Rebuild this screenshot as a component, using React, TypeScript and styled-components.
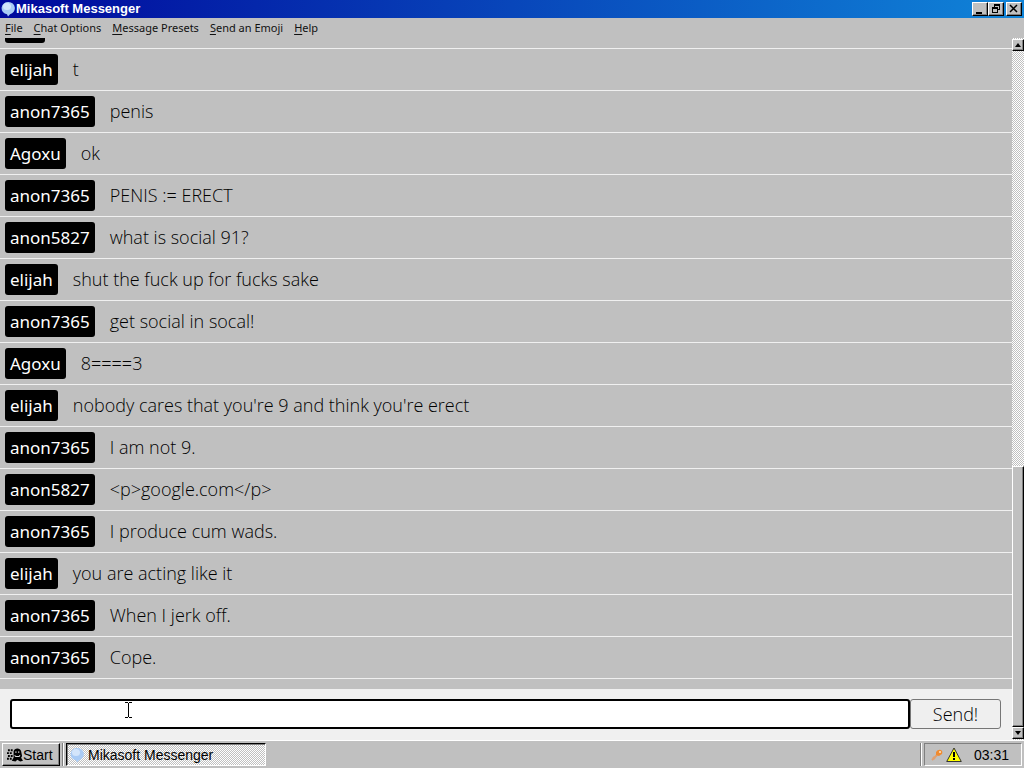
import React from "react";
import styled, { createGlobalStyle } from "styled-components";

const face = "#c0c0c0";
const uiFont = '"Liberation Sans", Arial, sans-serif';
const chatFont = '"Noto Sans", "Open Sans", sans-serif';
const lightFont = '"Open Sans", "Noto Sans", sans-serif';

const Global = createGlobalStyle`
  * { box-sizing: border-box; }
  body { margin: 0; background: ${face}; color: #000; }
`;

const Desktop = styled.div`
  display: flex;
  flex-direction: column;
  height: 100vh;
  overflow: hidden;
`;

const TitleBar = styled.header`
  display: flex;
  align-items: center;
  height: 18px;
  padding: 0 2px 0 1px;
  background: linear-gradient(90deg, #00089c, #1084d8);
  flex: none;
`;

const Title = styled.h1`
  flex: 1;
  margin: 0;
  color: #fff;
  font: bold 13px/18px ${uiFont};
`;

const WindowButtons = styled.div`
  display: flex;
`;

const CaptionButton = styled.button<{ $apart?: boolean }>`
  display: block;
  width: 16px;
  height: 14px;
  margin-left: ${(p) => (p.$apart ? 2 : 0)}px;
  padding: 0;
  background: ${face};
  border: 1px solid;
  border-color: #fff #000 #000 #fff;
  box-shadow: inset -1px -1px #808080;

  svg { display: block; }
`;

const MenuBar = styled.nav`
  display: flex;
  flex: none;
  gap: 11px;
  height: 20px;
  padding: 0 5px;
`;

const MenuButton = styled.button`
  padding: 0;
  border: 0;
  background: none;
  font: 11px/20px ${chatFont};
  color: #111;
  white-space: nowrap;
`;

const Hotkey = styled.span`
  text-decoration: underline;
  text-underline-offset: 2px;
`;

const Client = styled.main`
  display: flex;
  flex: 1;
  min-height: 0;
`;

const Chat = styled.section`
  display: flex;
  flex: 1;
  flex-direction: column;
  min-width: 0;
`;

const Messages = styled.ul`
  display: flex;
  flex: 1;
  flex-direction: column;
  justify-content: flex-end;
  min-height: 0;
  margin: 0;
  padding: 0 0 10px;
  overflow: hidden;
  list-style: none;
`;

const Message = styled.li`
  display: flex;
  flex: none;
  gap: 15px;
  height: 42px;
  padding: 5px;
  border-bottom: 1px solid #f0f0f0;
  font: 300 18px/31px ${lightFont};
`;

const Author = styled.b`
  min-width: 40px;
  height: 31px;
  padding: 0 5px;
  border-radius: 3px;
  background: #000;
  color: #fff;
  font: 17px/32px ${chatFont};
`;

const Composer = styled.form`
  display: flex;
  flex: none;
  padding: 10px 11px 11px 10px;
  background: #f0f0f0;
`;

const TextField = styled.div`
  position: relative;
  display: flex;
  flex: 1;
  min-width: 0;
`;

const TextBox = styled.input`
  flex: 1;
  min-width: 0;
  height: 30px;
  border: 2px solid #000;
  border-radius: 3px;
  background: #fff;
  outline: 0;
  font: 300 18px/24px ${lightFont};
`;

const Pointer = styled.svg`
  position: absolute;
  top: 3px;
  left: 115px;
  pointer-events: none;
`;

const SendButton = styled.button`
  width: 91px;
  height: 30px;
  padding: 0;
  border: 1px solid #767676;
  border-radius: 3px;
  background: #efefef;
  color: #000;
  font: 300 18px/28px ${lightFont};
`;

const ScrollBar = styled.div`
  display: flex;
  flex: none;
  flex-direction: column;
  width: 12px;
  padding: 1px 0;
  background: repeating-conic-gradient(#fff 0 25%, ${face} 0 50%) 0 0 / 2px 2px;
`;

const ScrollButton = styled.button`
  flex: none;
  width: 12px;
  height: 12px;
  padding: 0;
  border: 1px solid;
  border-color: #fff #000 #000 #fff;
  background: ${face};
  box-shadow: inset -1px -1px #808080;

  svg { display: block; }
`;

const ScrollTrack = styled.div`
  flex: 8;
`;

const ScrollThumb = styled.div`
  flex: 5;
  border: 1px solid;
  border-color: #fff #000 #000 #fff;
  background: ${face};
  box-shadow: inset -1px -1px #808080;
`;

const TaskBar = styled.footer`
  display: flex;
  flex: none;
  align-items: center;
  gap: 2px;
  height: 28px;
  padding: 0 2px;
  border-top: 1px solid #fff;
  background: ${face};
  font: 14px/20px ${uiFont};
`;

const StartButton = styled.button`
  display: flex;
  align-items: center;
  height: 23px;
  width: 58px;
  padding: 0 0 0 4px;
  border: 1px solid;
  border-color: #fff #000 #000 #fff;
  background: ${face};
  box-shadow: inset -1px -1px #808080;
  font: 14px/20px ${uiFont};
  color: #000;
`;

const Divider = styled.span`
  width: 2px;
  height: 23px;
  border-left: 1px solid #808080;
  border-right: 1px solid #fff;
`;

const TaskButton = styled.button`
  display: flex;
  align-items: center;
  gap: 3px;
  width: 200px;
  height: 23px;
  padding: 0 3px;
  border: 1px solid;
  border-color: #000 #fff #fff #000;
  background: repeating-conic-gradient(#fff 0 25%, ${face} 0 50%) 0 0 / 2px 2px;
  box-shadow: inset 1px 1px #808080;
  font: 14px/20px ${uiFont};
  color: #000;
`;

const Tray = styled.div`
  display: flex;
  align-items: center;
  gap: 2px;
  height: 23px;
  padding: 0 12px 0 5px;
  border: 1px solid;
  border-color: #808080 #fff #fff #808080;
`;

const Clock = styled.time`
  margin-left: 10px;
`;

const Spacer = styled.span`
  flex: 1;
`;

const Balloon = () => (
  <svg width="15" height="16" viewBox="0 0 15 16" aria-hidden="true">
    <path d="M7.500 1a6.500 6.200 0 0 1 1.500 12.200L7 15.500 6 13.300A6.500 6.200 0 0 1 7.500 1Z" fill="#a9cbf5" />
    <ellipse cx="6" cy="5.500" rx="4" ry="3.500" fill="#d3e5fb" />
  </svg>
);

const StartLogo = () => (
  <svg width="16" height="16" viewBox="0 0 17 16" aria-hidden="true">
    <path d="M7 4q1-3 4-3t4 3l1 5-1 2 2 3-3 1-3-2-2 2-4-1 2-3Z" fill="#000" />
    <path d="M1 3h5M0 6h6M1 9h5M0 12h6" stroke="#000" strokeWidth="2" strokeDasharray="2 1" />
    <path d="M9 4h1v2H9zM12 4h1v2h-1zM8 8h1v1h4V8h1v1l-1 1H9L8 9Z" fill="#ddd" />
  </svg>
);

const KeyIcon = () => (
  <svg width="14" height="14" viewBox="0 0 14 14" aria-hidden="true">
    <path d="M2 12 8 6M3 9l2 2" stroke="#e0a070" strokeWidth="2" />
    <path d="M6 4q2-3 5-2 2 1 1 4l-3 2-3-1Z" fill="#f08b30" />
    <path d="M9 3h2v2H9z" fill="#fbd0a0" />
  </svg>
);

const WarningIcon = () => (
  <svg width="16" height="16" viewBox="0 0 16 16" aria-hidden="true">
    <path d="M8 1 15.300 14.500H.7Z" fill="#ff0" stroke="#333" strokeLinejoin="round" />
    <path d="M7 5h2v5H7zM7 11h2v2H7z" fill="#000" />
  </svg>
);

const menus = ["File", "Chat Options", "Message Presets", "Send an Emoji", "Help"];

const messages = [
  ["", ""],
  ["elijah", "t"],
  ["anon7365", "penis"],
  ["Agoxu", "ok"],
  ["anon7365", "PENIS := ERECT"],
  ["anon5827", "what is social 91?"],
  ["elijah", "shut the fuck up for fucks sake"],
  ["anon7365", "get social in socal!"],
  ["Agoxu", "8====3"],
  ["elijah", "nobody cares that you're 9 and think you're erect"],
  ["anon7365", "I am not 9."],
  ["anon5827", "<p>google.com</p>"],
  ["anon7365", "I produce cum wads."],
  ["elijah", "you are acting like it"],
  ["anon7365", "When I jerk off."],
  ["anon7365", "Cope."],
];

export default function App() {
  return (
    <Desktop>
      <Global />
      <TitleBar>
        <Balloon />
        <Title>Mikasoft Messenger</Title>
        <WindowButtons>
          <CaptionButton aria-label="Minimize">
            <svg width="14" height="12"><path d="M3 9h6v2H3z" /></svg>
          </CaptionButton>
          <CaptionButton aria-label="Restore">
            <svg width="14" height="12" shapeRendering="crispEdges">
              <path d="M5 1h6v2H5zM5 3h1v2H5zM10 3h1v4h-1zM9 6h1v1H9zM3 4h6v2H3zM3 6h1v4H3zM8 6h1v4H8zM3 9h6v1H3z" />
            </svg>
          </CaptionButton>
          <CaptionButton $apart aria-label="Close">
            <svg width="14" height="12"><path d="m3 2 7 7m0-7-7 7" stroke="#000" strokeWidth="1.500" /></svg>
          </CaptionButton>
        </WindowButtons>
      </TitleBar>
      <MenuBar>
        {menus.map((m) => (
          <MenuButton key={m}><Hotkey>{m[0]}</Hotkey>{m.slice(1)}</MenuButton>
        ))}
      </MenuBar>
      <Client>
        <Chat>
          <Messages>
            {messages.map(([author, text], i) => (
              <Message key={i}><Author>{author}</Author><span>{text}</span></Message>
            ))}
          </Messages>
          <Composer onSubmit={(e) => e.preventDefault()}>
            <TextField>
              <TextBox type="text" aria-label="Message" />
              <Pointer width="7" height="16" viewBox="0 0 7 16" shapeRendering="crispEdges" aria-hidden="true">
                <path d="M0 0h3v1H0zM4 0h3v1H4zM3 1h1v14H3zM0 15h3v1H0zM4 15h3v1H4z" />
              </Pointer>
            </TextField>
            <SendButton>Send!</SendButton>
          </Composer>
        </Chat>
        <ScrollBar>
          <ScrollButton aria-label="Scroll up">
            <svg width="10" height="10"><path d="M2 7h6L5 3Z" /></svg>
          </ScrollButton>
          <ScrollTrack />
          <ScrollThumb />
          <ScrollButton aria-label="Scroll down">
            <svg width="10" height="10"><path d="M2 3h6L5 7Z" /></svg>
          </ScrollButton>
        </ScrollBar>
      </Client>
      <TaskBar>
        <StartButton><StartLogo />Start</StartButton>
        <Divider />
        <TaskButton><Balloon />Mikasoft Messenger</TaskButton>
        <Spacer />
        <Divider />
        <Tray><KeyIcon /><WarningIcon /><Clock>03:31</Clock></Tray>
      </TaskBar>
    </Desktop>
  );
}
